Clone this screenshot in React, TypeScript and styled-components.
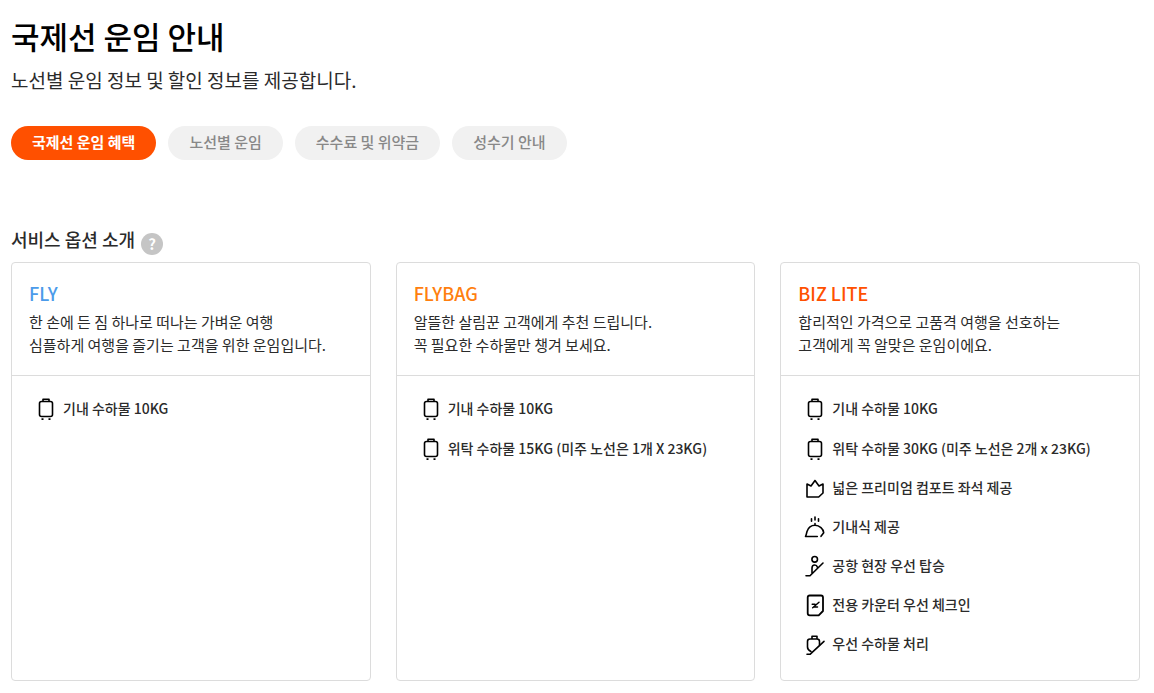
import React from "react";
import styled, { createGlobalStyle } from "styled-components";

const GlobalStyle = createGlobalStyle`
  *, *::before, *::after {
    box-sizing: border-box;
  }
  body {
    margin: 0;
    background: #fff;
    color: #2b2b2b;
    font-family: "Noto Sans CJK KR", "Noto Sans", sans-serif;
  }
  h1, h2, h3, p, ul {
    margin: 0;
    padding: 0;
  }
`;

const Page = styled.main`
  padding: 16px 14px 12px 11px;
`;

const Title = styled.h1`
  color: #000;
  font-size: 31px;
  line-height: 40px;
  font-weight: 500;
`;

const Lead = styled.p`
  margin-top: 8px;
  font-size: 19px;
  line-height: 32px;
  font-weight: 400;
`;

const Tabs = styled.nav`
  display: flex;
  flex-wrap: wrap;
  gap: 12px;
  margin-top: 30px;
`;

const Tab = styled.button<{ $active?: boolean }>`
  height: 34px;
  padding: 0 21px 2px;
  border: 0;
  border-radius: 17px;
  background: ${(p) => (p.$active ? "#ff5000" : "#f1f1f1")};
  color: ${(p) => (p.$active ? "#fff" : "#888")};
  font-family: inherit;
  font-size: 15px;
  line-height: 24px;
  font-weight: ${(p) => (p.$active ? 700 : 500)};
  cursor: pointer;
`;

const SectionHead = styled.header`
  display: flex;
  align-items: flex-end;
  gap: 6px;
  margin-top: 67px;
`;

const SectionTitle = styled.h2`
  padding-bottom: 4px;
  font-size: 18px;
  line-height: 24px;
  font-weight: 500;
`;

const HelpButton = styled.button`
  width: 22px;
  height: 22px;
  padding: 0;
  border: 0;
  border-radius: 50%;
  background: #c5c5c5;
  color: #fff;
  font-family: inherit;
  font-size: 15px;
  line-height: 22px;
  font-weight: 700;
  cursor: pointer;
`;

const Cards = styled.section`
  display: grid;
  grid-template-columns: repeat(3, 1fr);
  gap: 25px;
  margin-top: 7px;
`;

const Card = styled.article`
  border: 1px solid #dcdcdc;
  border-radius: 4px;
`;

const CardHead = styled.header`
  padding: 16px 17px 19px;
  border-bottom: 1px solid #dcdcdc;
`;

const CardName = styled.h3<{ $color: string }>`
  margin-bottom: 3px;
  color: ${(p) => p.$color};
  font-size: 18px;
  line-height: 28px;
  font-weight: 500;
`;

const CardText = styled.p`
  font-size: 15px;
  line-height: 23px;
`;

const Benefits = styled.ul`
  display: grid;
  gap: 16px;
  padding: 20px 23px 25px;
  list-style: none;
`;

const Benefit = styled.li<{ $bag: boolean }>`
  display: flex;
  align-items: flex-start;
  gap: 6px;
  font-size: 14px;
  line-height: ${(p) => (p.$bag ? 24 : 23)}px;
  font-weight: 500;
`;

const Glyph = styled.svg`
  flex: none;
  width: 22px;
  height: 23px;
  overflow: visible;
  fill: none;
  stroke: #000;
  stroke-width: 1.6;
  stroke-linecap: round;
  stroke-linejoin: round;
`;

type IconName = "bag" | "crown" | "meal" | "boarding" | "checkin" | "priority";

const drawings: Record<IconName, React.ReactNode> = {
  bag: (
    <>
      <rect x="4.5" y="5.5" width="13" height="15" rx="2" />
      <path d="M8 5V3.2H14V5" />
      <path d="M7.5 22.2V24M14.5 22.2V24" strokeWidth="2" strokeLinecap="butt" />
    </>
  ),
  crown: <path d="M3 8V21H14.7L19 17V8L15 10L11 4.5L7 10Z" />,
  meal: (
    <>
      <path d="M13.3 21.5H1.5C2.5 19.5 2.5 18 3 16.5C4.3 12.5 7 10.3 11 10.3C15.5 10.3 19.5 14 19.7 17.8L17 21.3M11 8.5V10" />
      <path d="M7.5 3.7V6.3M11 2V5M14.5 3.7V6.3" />
    </>
  ),
  boarding: (
    <>
      <circle cx="10.7" cy="5.3" r="2.8" />
      <path d="M2 21.7H6L19 9M8 19V14C8 12 9.2 11 10.7 11C12 11 13 11.7 13.3 13" />
    </>
  ),
  checkin: (
    <>
      <path
        d="M5.7 2.5H17Q19 2.5 19 4.5V18L14.7 22.3H5.7Q3.7 22.3 3.7 20.3V4.5Q3.7 2.5 5.7 2.5Z"
        strokeWidth="1.8"
      />
      <path d="M8.2 11.2H11M15 9.2L8.7 14.7M10.5 14H13.5" strokeWidth="1.5" />
    </>
  ),
  priority: (
    <>
      <path d="M8 7V4.2H13V7M7 19.5Q3.5 18 3.5 15V9.5Q3.5 7 6 7H13Q15.5 7 15.5 9.5V13" />
      <path d="M3 22.3H6L20 9.3" />
    </>
  ),
};

const Icon = ({ name }: { name: IconName }) => (
  <Glyph viewBox="0 0 22 23" aria-hidden="true">
    {drawings[name]}
  </Glyph>
);

type Fare = {
  name: string;
  color: string;
  text: [string, string];
  benefits: [IconName, string][];
};

const fares: Fare[] = [
  {
    name: "FLY",
    color: "#4b9bea",
    text: ["한 손에 든 짐 하나로 떠나는 가벼운 여행", "심플하게 여행을 즐기는 고객을 위한 운임입니다."],
    benefits: [["bag", "기내 수하물 10KG"]],
  },
  {
    name: "FLYBAG",
    color: "#ff7f0f",
    text: ["알뜰한 살림꾼 고객에게 추천 드립니다.", "꼭 필요한 수하물만 챙겨 보세요."],
    benefits: [
      ["bag", "기내 수하물 10KG"],
      ["bag", "위탁 수하물 15KG (미주 노선은 1개 X 23KG)"],
    ],
  },
  {
    name: "BIZ LITE",
    color: "#ff5000",
    text: ["합리적인 가격으로 고품격 여행을 선호하는", "고객에게 꼭 알맞은 운임이에요."],
    benefits: [
      ["bag", "기내 수하물 10KG"],
      ["bag", "위탁 수하물 30KG (미주 노선은 2개 x 23KG)"],
      ["crown", "넓은 프리미엄 컴포트 좌석 제공"],
      ["meal", "기내식 제공"],
      ["boarding", "공항 현장 우선 탑승"],
      ["checkin", "전용 카운터 우선 체크인"],
      ["priority", "우선 수하물 처리"],
    ],
  },
];

const tabs = ["국제선 운임 혜택", "노선별 운임", "수수료 및 위약금", "성수기 안내"];

export default function App() {
  const [active, setActive] = React.useState(0);
  return (
    <>
      <GlobalStyle />
      <Page>
        <Title>국제선 운임 안내</Title>
        <Lead>노선별 운임 정보 및 할인 정보를 제공합니다.</Lead>
        <Tabs>
          {tabs.map((label, i) => (
            <Tab key={label} type="button" $active={i === active} onClick={() => setActive(i)}>
              {label}
            </Tab>
          ))}
        </Tabs>
        <SectionHead>
          <SectionTitle>서비스 옵션 소개</SectionTitle>
          <HelpButton type="button">?</HelpButton>
        </SectionHead>
        <Cards>
          {fares.map((fare) => (
            <Card key={fare.name}>
              <CardHead>
                <CardName $color={fare.color}>{fare.name}</CardName>
                <CardText>
                  {fare.text[0]}
                  <br />
                  {fare.text[1]}
                </CardText>
              </CardHead>
              <Benefits>
                {fare.benefits.map(([icon, label]) => (
                  <Benefit key={label} $bag={icon === "bag"}>
                    <Icon name={icon} />
                    {label}
                  </Benefit>
                ))}
              </Benefits>
            </Card>
          ))}
        </Cards>
      </Page>
    </>
  );
}
